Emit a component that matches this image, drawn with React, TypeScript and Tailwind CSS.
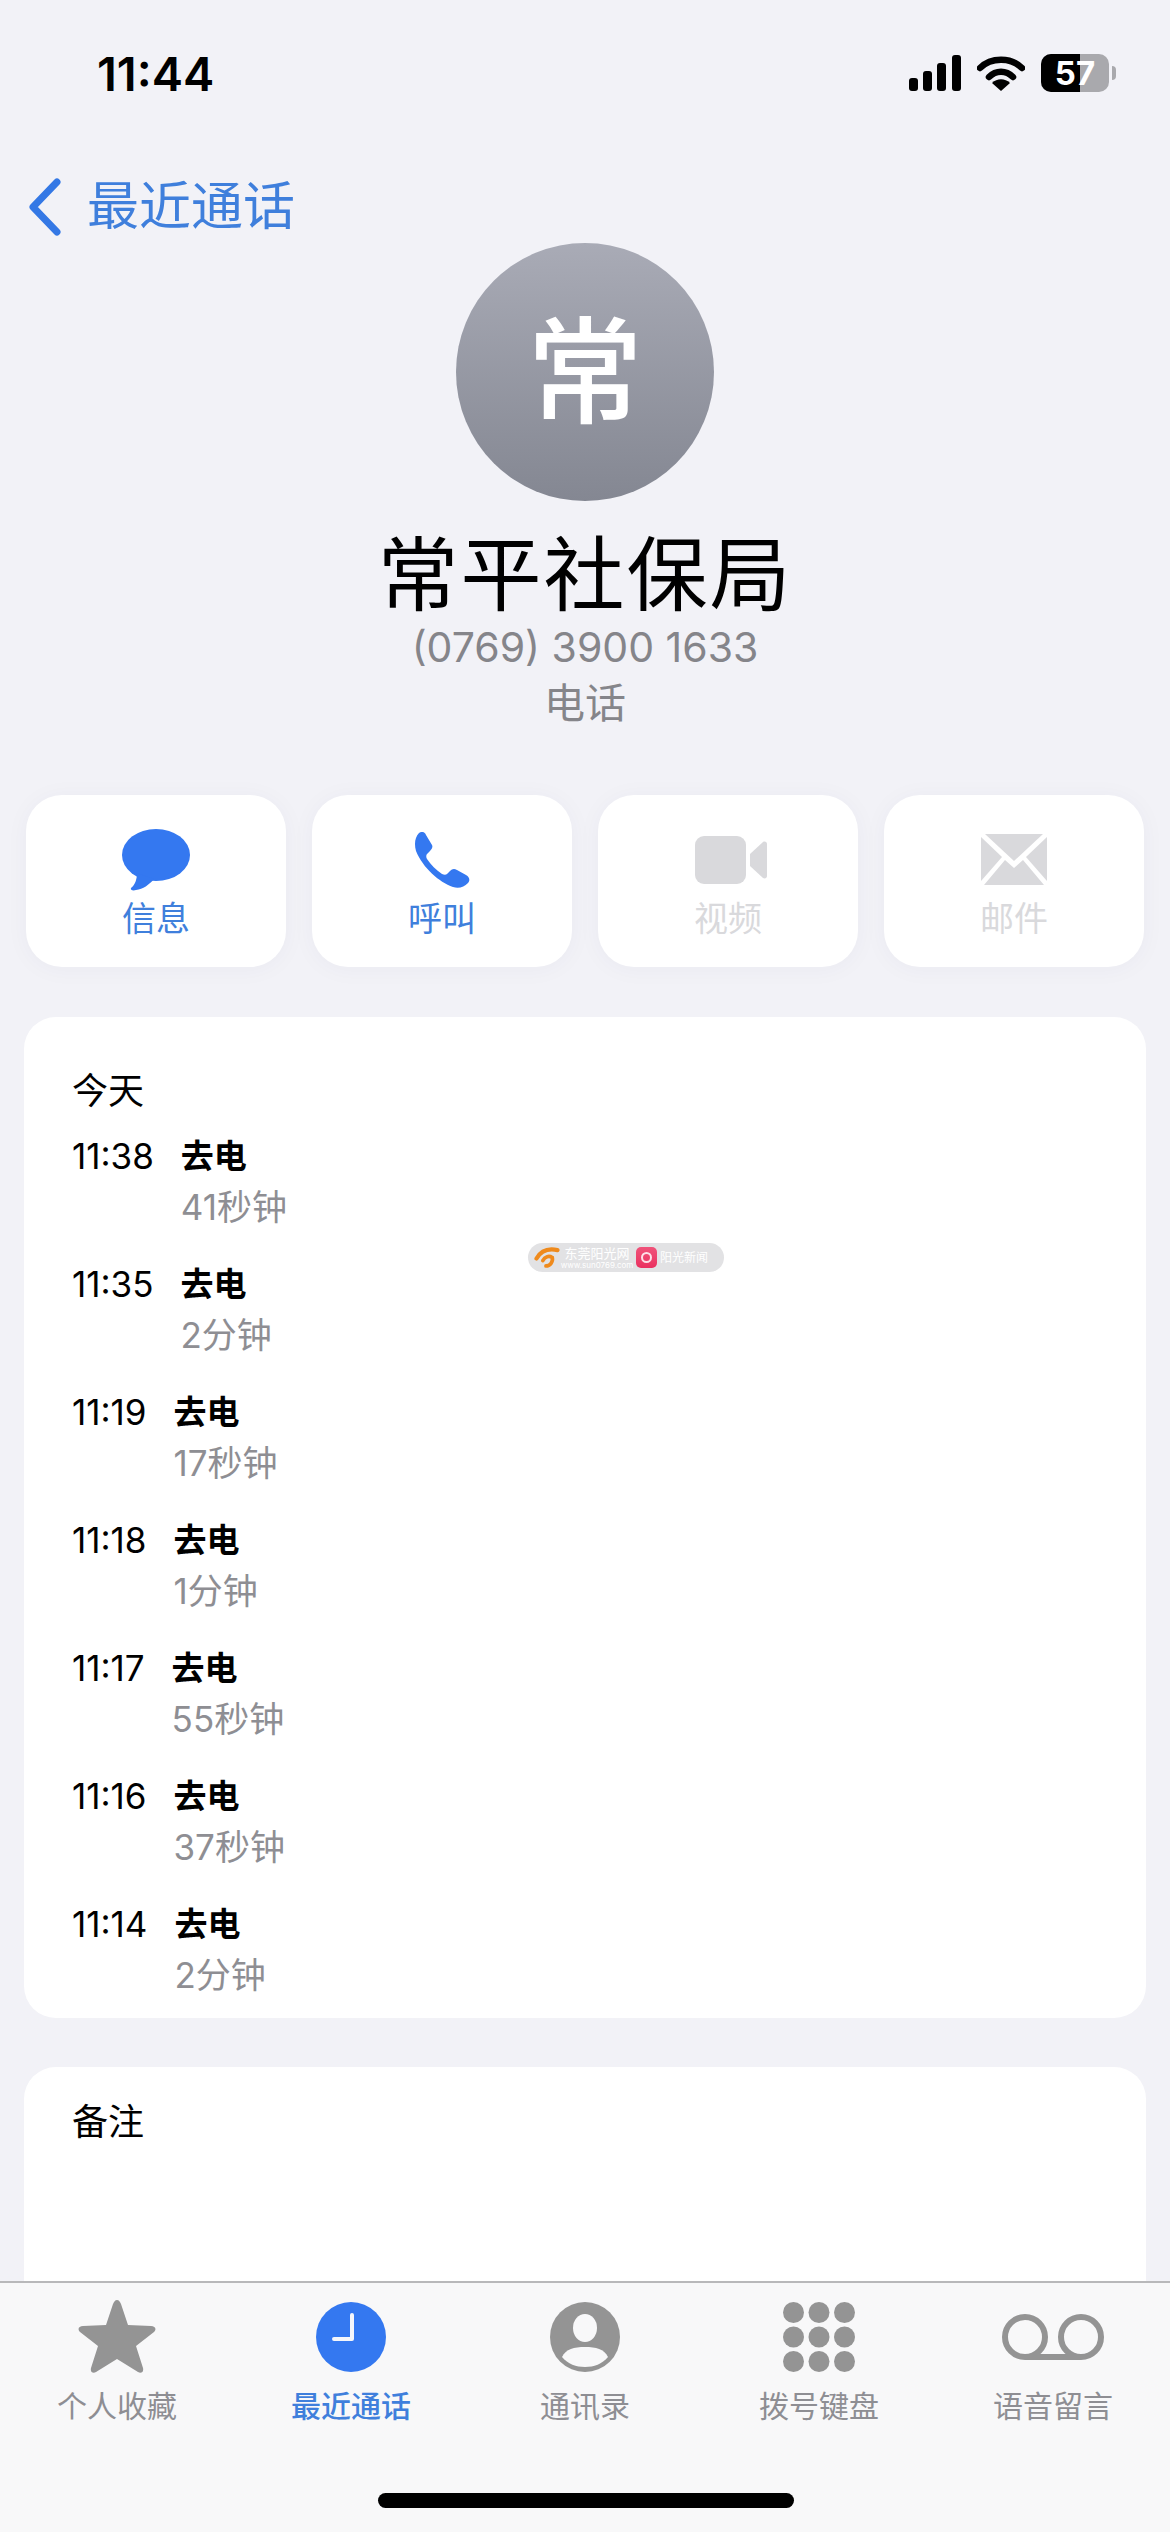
const cjk = "font-['Inter','Noto_Sans_CJK_SC',sans-serif]";

const calls = [
  { time: '11:38', duration: '41秒钟' },
  { time: '11:35', duration: '2分钟' },
  { time: '11:19', duration: '17秒钟' },
  { time: '11:18', duration: '1分钟' },
  { time: '11:17', duration: '55秒钟' },
  { time: '11:16', duration: '37秒钟' },
  { time: '11:14', duration: '2分钟' },
];

function StatusBar() {
  return (
    <div className="flex justify-between items-center h-[146px] pl-[97px] pr-[54px]">
      <span className="text-[47px] font-semibold text-black font-['Inter',sans-serif] leading-none">11:44</span>
      <div className="flex items-center gap-[16px]">
        <svg width="52" height="36" viewBox="0 0 52 36" fill="#000">
          <rect x="0" y="23" width="9" height="13" rx="3" />
          <rect x="14" y="16" width="9" height="20" rx="3" />
          <rect x="28" y="8" width="9" height="28" rx="3" />
          <rect x="43" y="0" width="9" height="36" rx="3" />
        </svg>
        <svg width="48" height="36" viewBox="0 0 48 36" fill="none">
          <path d="M3 13C14 2 34 2 45 13" stroke="#000" strokeWidth="6.5" strokeLinecap="round" />
          <path d="M12 22C19 15 29 15 36 22" stroke="#000" strokeWidth="6.5" strokeLinecap="round" />
          <path d="M24 36L15 28C20 23 28 23 33 28Z" fill="#000" />
        </svg>
        <div className="relative flex items-center">
          <div className="relative w-[68px] h-[38px] rounded-[10px] overflow-hidden bg-[#a9a9ad]">
            <div className="absolute inset-y-0 left-0 w-[39px] bg-black" />
            <span className="absolute inset-0 flex items-center justify-center text-white text-[33px] font-bold font-['Inter',sans-serif] leading-none">57</span>
          </div>
          <div className="w-[4px] h-[14px] ml-[3px] rounded-r-full bg-[#a9a9ad]" />
        </div>
      </div>
    </div>
  );
}

function NavBar() {
  return (
    <div className="flex items-center h-[90px] pl-[28px] gap-[25px] mt-[16px]">
      <svg width="34" height="58" viewBox="0 0 34 58" fill="none">
        <path d="M29 4L5 29L29 54" stroke="#3478e5" strokeWidth="7" strokeLinecap="round" strokeLinejoin="round" />
      </svg>
      <span className={`text-[52px] leading-none text-[#3f7fdc] ${cjk}`}>最近通话</span>
    </div>
  );
}

function Header() {
  return (
    <div className="flex flex-col items-center -mt-[9px]">
      <div className="w-[258px] h-[258px] rounded-full bg-gradient-to-b from-[#a9abb6] to-[#848792] flex items-center justify-center">
        <span className={`text-white text-[116px] font-medium leading-none ${cjk}`}>常</span>
      </div>
      <div className={`mt-[29px] text-[81px] leading-[90px] text-black tracking-[2px] ${cjk}`}>常平社保局</div>
      <div className="mt-[2px] text-[41px] leading-[50px] text-[#85858a] font-['Inter',sans-serif]">(0769) 3900 1633</div>
      <div className={`mt-[6px] text-[41px] leading-[50px] text-[#85858a] ${cjk}`}>电话</div>
    </div>
  );
}

function ActionButton({ label, disabled, icon }: { label: string; disabled?: boolean; icon: React.ReactNode }) {
  return (
    <div className="w-[260px] h-[172px] bg-white rounded-[36px] flex flex-col items-center shadow-[0_2px_24px_rgba(40,40,90,0.04)]">
      <div className="h-[96px] mt-[17px] flex items-center justify-center">{icon}</div>
      <span className={`text-[34px] leading-[40px] -mt-[9px] ${disabled ? 'text-[#d9d9dc]' : 'text-[#3f7fdc]'} ${cjk}`}>{label}</span>
    </div>
  );
}

function Actions() {
  return (
    <div className="flex justify-between pl-[26px] pr-[26px] mt-[67px]">
      <ActionButton
        label="信息"
        icon={
          <svg width="68" height="62" viewBox="0 0 68 62" fill="#3478f0">
            <ellipse cx="34" cy="26" rx="34" ry="26" />
            <path d="M15 44C15 50 13 56 9 59C8 61 11 62 14 61C21 60 27 56 32 50Z" />
          </svg>
        }
      />
      <ActionButton
        label="呼叫"
        icon={
          <svg width="56" height="56" viewBox="0 0 56 56" fill="#3478f0">
            <path d="M5 1C8-1 11 0 12 3L18 13C19 15 18 17 16 19L13 22C12 23 12 25 13 27C17 33 22 38 28 42C30 43 32 43 33 42L36 39C38 37 40 36 43 38L52 43C56 45 56 49 54 51C50 55 45 57 39 55C25 50 9 36 2 19C0 12 1 5 5 1Z" />
          </svg>
        }
      />
      <ActionButton
        label="视频"
        disabled
        icon={
          <svg width="72" height="48" viewBox="0 0 72 48" fill="#d9d9dc" className="ml-[6px]">
            <rect x="0" y="0" width="51" height="48" rx="9" />
            <path d="M55 18L68 6C70 5 72 6 72 8V40C72 42 70 43 68 42L55 30Z" />
          </svg>
        }
      />
      <ActionButton
        label="邮件"
        disabled
        icon={
          <svg width="66" height="52" viewBox="0 0 66 52" fill="#d9d9dc">
            <path d="M4 0H62L33 27Z" />
            <path d="M0 3L21 23L0 47Z" />
            <path d="M66 3L45 23L66 47Z" />
            <path d="M24 26L33 34L42 26L63 51H3Z" />
          </svg>
        }
      />
    </div>
  );
}

function CallRow({ time, duration }: { time: string; duration: string }) {
  return (
    <div className="flex gap-[27px] h-[128px]">
      <span className="text-[35px] leading-[50px] text-black font-['Inter',sans-serif]">{time}</span>
      <div className="flex flex-col">
        <span className={`text-[33px] leading-[50px] font-semibold text-black ${cjk}`}>去电</span>
        <span className={`text-[35px] leading-[50px] mt-[1px] text-[#8e8e93] ${cjk}`}>{duration}</span>
      </div>
    </div>
  );
}

function CallHistory() {
  return (
    <div className="relative mx-[24px] mt-[50px] h-[1001px] bg-white rounded-[32px] pl-[48px] pt-[49px]">
      <div className={`text-[36px] leading-[50px] text-black ${cjk}`}>今天</div>
      <div className="mt-[15px]">
        {calls.map((c) => (
          <CallRow key={c.time} time={c.time} duration={c.duration} />
        ))}
      </div>
      {/* watermark */}
      <div className="absolute left-[504px] top-[226px] w-[196px] h-[29px] rounded-full bg-[#e2e2e4] flex items-center pl-[5px] gap-[3px]">
        <svg width="28" height="21" viewBox="0 0 24 20" fill="none" className="shrink-0">
          <path d="M2 11C6 4 13 1 22 3" stroke="#ef8a1c" strokeWidth="4" strokeLinecap="round" />
          <path d="M8 13C10 9 14 8 17 10C18 14 15 18 11 18" stroke="#ef8a1c" strokeWidth="3.5" strokeLinecap="round" />
        </svg>
        <div className="flex flex-col items-center w-[66px] shrink-0">
          <span className={`text-[13px] leading-[15px] text-white whitespace-nowrap ${cjk}`}>东莞阳光网</span>
          <span className="text-[8px] leading-[9px] text-white whitespace-nowrap font-['Inter',sans-serif]">www.sun0769.com</span>
        </div>
        <div className="w-[21px] h-[21px] ml-[3px] shrink-0 rounded-[5px] bg-gradient-to-b from-[#f0527a] to-[#ea3060] flex items-center justify-center">
          <div className="w-[11px] h-[11px] rounded-full border-[2px] border-[#fde0e8]" />
        </div>
        <span className={`text-[12px] leading-none text-white whitespace-nowrap ${cjk}`}>阳光新闻</span>
      </div>
    </div>
  );
}

function Notes() {
  return (
    <div className="mx-[24px] mt-[49px] h-[400px] bg-white rounded-t-[32px] pl-[48px] pt-[30px]">
      <div className={`text-[36px] leading-[50px] text-black ${cjk}`}>备注</div>
    </div>
  );
}

function TabItem({ label, active, icon }: { label: string; active?: boolean; icon: React.ReactNode }) {
  return (
    <div className="flex-1 flex flex-col items-center">
      <div className="h-[80px] flex items-center justify-center">{icon}</div>
      <span className={`mt-[10px] text-[30px] leading-[38px] ${active ? 'text-[#3f7fdc] font-medium' : 'text-[#8e8e93]'} ${cjk}`}>{label}</span>
    </div>
  );
}

function TabBar() {
  return (
    <div className="absolute left-0 right-0 bottom-0 h-[251px] bg-[#f8f8f9] border-t-[2px] border-[#b8b8ba]">
      <div className="flex justify-between pt-[14px] w-[1170px]">
        <TabItem
          label="个人收藏"
          icon={
            <svg width="78" height="74" viewBox="0 0 78 74" fill="#949494">
              <path d="M39 0C41 0 42 2 43 4L50 25L73 26C77 26 79 29 76 32L58 46L65 68C66 72 63 74 60 72L39 59L18 72C15 74 12 72 13 68L20 46L2 32C-1 29 1 26 5 26L28 25L35 4C36 2 37 0 39 0Z" />
            </svg>
          }
        />
        <TabItem
          label="最近通话"
          active
          icon={
            <svg width="70" height="70" viewBox="0 0 70 70">
              <circle cx="35" cy="35" r="35" fill="#3478f0" />
              <path d="M36 13V37H18" fill="none" stroke="#f4f6fb" strokeWidth="4" strokeLinecap="round" strokeLinejoin="round" />
            </svg>
          }
        />
        <TabItem
          label="通讯录"
          icon={
            <svg width="70" height="70" viewBox="0 0 70 70">
              <circle cx="35" cy="35" r="35" fill="#949494" />
              <ellipse cx="35" cy="26" rx="12" ry="14" fill="#f8f8f9" />
              <path d="M12 55C16 47 24 45 35 45C46 45 54 47 58 55C52 62 44 65 35 65C26 65 18 62 12 55Z" fill="#f8f8f9" />
            </svg>
          }
        />
        <TabItem
          label="拨号键盘"
          icon={
            <svg width="72" height="70" viewBox="0 0 72 70" fill="#949494">
              {[10.5, 36, 61.5].map((cx) =>
                [10.5, 35, 59.5].map((cy) => <circle key={`${cx}-${cy}`} cx={cx} cy={cy} r="10.5" />),
              )}
            </svg>
          }
        />
        <TabItem
          label="语音留言"
          icon={
            <svg width="102" height="46" viewBox="0 0 102 46" fill="none" stroke="#949494" strokeWidth="6">
              <circle cx="23" cy="23" r="20" />
              <circle cx="79" cy="23" r="20" />
              <path d="M23 43H79" />
            </svg>
          }
        />
      </div>
      <div className="absolute left-[378px] bottom-[24px] w-[416px] h-[15px] rounded-full bg-black" />
    </div>
  );
}

export default function App() {
  return (
    <div className="relative w-[1170px] h-[2532px] overflow-hidden bg-[#f2f2f7]">
      <StatusBar />
      <NavBar />
      <Header />
      <Actions />
      <CallHistory />
      <Notes />
      <TabBar />
    </div>
  );
}
